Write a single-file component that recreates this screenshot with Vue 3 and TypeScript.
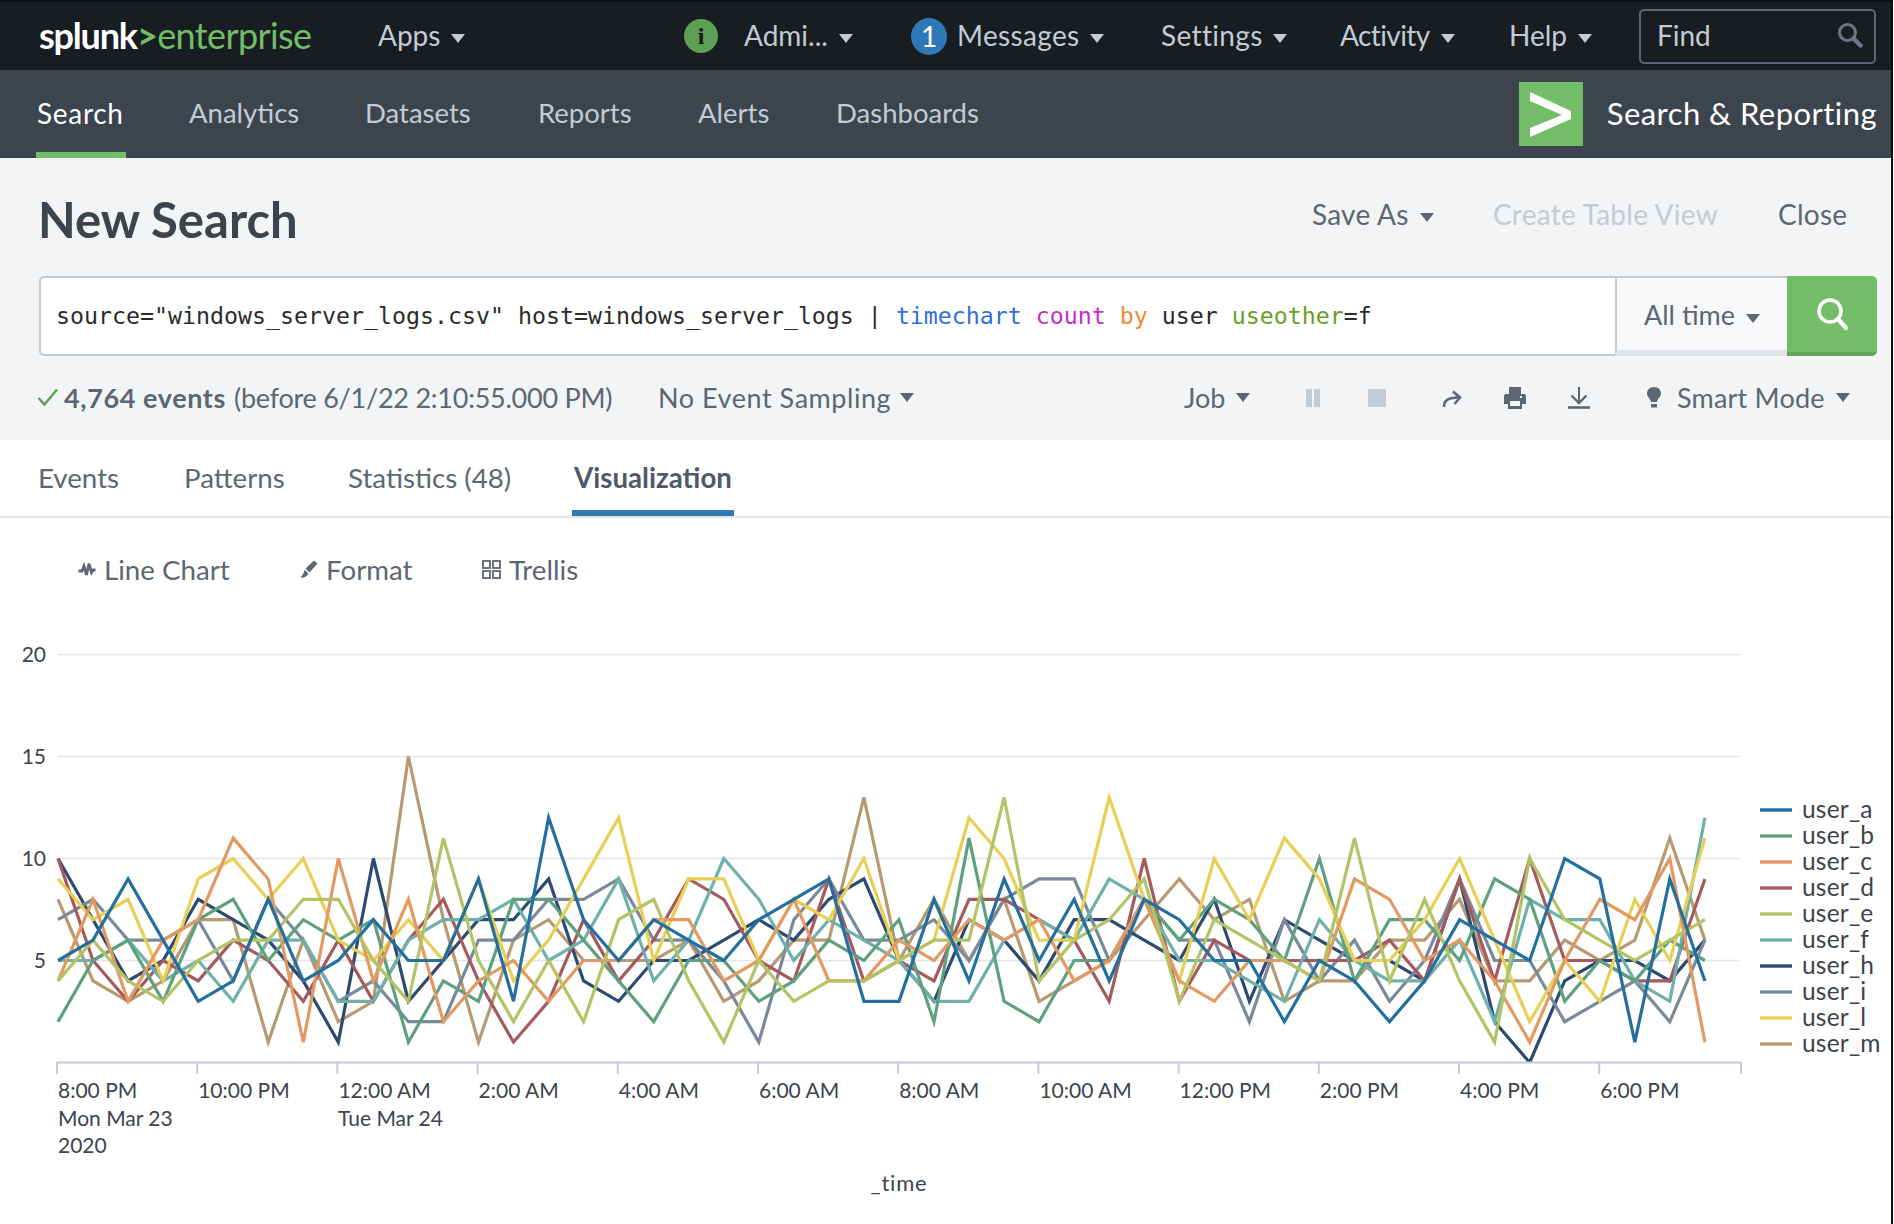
<script setup lang="ts">
interface Series { name: string; color: string; values: number[] }

const raw: Series[] = [
  { name: 'user_a', color: '#256f9f', values: [5,6,9,6,3,4,8,4,5,7,5,5,9,3,12,7,5,7,6,5,7,8,9,3,3,8,4,9,5,8,4,8,7,5,5,2,5,4,2,4,7,6,5,10,9,1,9,4] },
  { name: 'user_b', color: '#5fa17f', values: [2,5,6,3,7,8,5,7,6,7,1,4,3,8,8,6,4,2,5,5,3,4,6,5,7,2,11,3,2,5,5,8,6,8,7,5,10,4,7,7,5,9,8,3,5,4,6,5] },
  { name: 'user_c', color: '#e29a62', values: [4,8,3,6,7,11,9,1,10,4,8,2,4,5,3,5,5,7,7,4,5,8,4,4,6,5,7,6,7,4,5,8,4,3,5,5,4,9,8,5,6,4,1,5,8,7,10,1] },
  { name: 'user_d', color: '#a55b5d', values: [10,5,3,5,4,6,5,3,6,3,6,8,4,1,3,7,4,6,9,8,5,4,9,4,5,4,8,8,7,6,3,10,3,6,5,5,5,5,6,4,9,4,10,5,5,4,4,9] },
  { name: 'user_e', color: '#b3c365', values: [4,6,4,3,5,6,6,8,8,5,3,11,5,2,5,2,7,8,4,1,5,3,4,4,5,6,6,13,4,6,7,9,3,7,6,5,4,11,4,8,4,1,10,7,6,5,6,7] },
  { name: 'user_f', color: '#6fb0ab', values: [5,5,6,4,5,3,6,6,3,3,6,7,7,8,5,6,9,4,6,10,8,5,7,6,5,3,3,6,7,6,9,8,5,5,4,3,7,5,4,4,6,2,8,7,7,4,3,12] },
  { name: 'user_h', color: '#2d4b70', values: [10,7,4,5,8,7,6,4,1,10,3,5,7,7,9,4,3,5,5,6,7,6,8,9,5,3,7,6,4,7,7,6,5,8,3,7,6,5,5,4,9,2,0,4,5,5,4,6] },
  { name: 'user_i', color: '#7a8a9b', values: [7,8,6,6,7,4,8,6,3,4,2,2,6,6,8,8,9,6,6,4,1,7,9,6,6,7,5,8,9,9,5,8,6,6,2,7,4,6,3,5,9,5,5,2,3,4,2,6] },
  { name: 'user_l', color: '#e8cf55', values: [9,7,8,4,9,10,8,10,6,5,7,5,9,4,6,9,12,5,9,9,5,8,7,10,5,6,12,10,6,6,13,8,4,10,7,11,9,5,5,7,10,6,2,5,3,8,5,11] },
  { name: 'user_m', color: '#b79a72', values: [8,4,3,4,7,7,1,6,2,3,15,7,1,6,7,5,5,5,6,3,4,6,6,13,5,8,5,8,3,4,5,7,9,7,8,3,4,4,6,6,8,4,4,6,5,6,11,6] },
]

const yOf = (v: number): number => 1062.5 - 20.4 * v
const xOf = (i: number): number => 58 + 35.04 * i

const legend = raw.map((s, i) => ({ ...s, y: 810 + i * 26 }))

const drawOrder = ['user_m', 'user_h', 'user_i', 'user_d', 'user_f', 'user_b', 'user_l', 'user_c', 'user_e', 'user_a']
const lines = drawOrder.map((n) => {
  const s = raw.find((r) => r.name === n) as Series
  return { name: s.name, color: s.color, points: s.values.map((v, i) => `${xOf(i).toFixed(1)},${yOf(v).toFixed(1)}`).join(' ') }
})

const grid = [5, 10, 15, 20].map((v) => ({ v, y: yOf(v) }))

const timeLabels = ['8:00 PM', '10:00 PM', '12:00 AM', '2:00 AM', '4:00 AM', '6:00 AM', '8:00 AM', '10:00 AM', '12:00 PM', '2:00 PM', '4:00 PM', '6:00 PM']
const ticks = timeLabels.map((label, i) => ({ label, x: 57 + 140.2 * i }))

const topMenu = [
  { label: 'Settings', cls: 'wide' },
  { label: 'Activity', cls: 'tight' },
  { label: 'Help', cls: '' },
]
const navItems = ['Analytics', 'Datasets', 'Reports', 'Alerts', 'Dashboards']
const tabs = [
  { label: 'Events', active: false },
  { label: 'Patterns', active: false },
  { label: 'Statistics (48)', active: false },
  { label: 'Visualization', active: true },
]
</script>

<template>
  <div class="page">
    <header class="topbar">
      <div class="logo"><span class="logo-a">splunk</span><span class="logo-b">&gt;</span><span class="logo-c">enterprise</span></div>
      <div class="top-item">Apps<i class="caret light"></i></div>
      <div class="badge info">i</div>
      <div class="top-item">Admi...<i class="caret light"></i></div>
      <div class="badge count">1</div>
      <div class="top-item wide">Messages<i class="caret light"></i></div>
      <div v-for="m in topMenu" :key="m.label" class="top-item" :class="m.cls">{{ m.label }}<i class="caret light"></i></div>
      <div class="find">
        <span>Find</span>
        <svg width="26" height="26" viewBox="0 0 26 26" fill="none" stroke="#6b7785">
          <circle cx="10.5" cy="10.5" r="8" stroke-width="3" />
          <path d="M16.5 16.5 L23.5 23.5" stroke-width="4.4" stroke-linecap="round" />
        </svg>
      </div>
    </header>

    <nav class="navbar">
      <div class="nav-item active">Search</div>
      <div v-for="n in navItems" :key="n" class="nav-item">{{ n }}</div>
      <div class="brand">
        <div class="brand-mark">
          <svg width="64" height="64" viewBox="0 0 64 64"><path d="M11 10 L52 29 L52 37 L11 55 L11 46 L43 33 L11 19 Z" fill="#fff" /></svg>
        </div>
        <div class="brand-name">Search &amp; Reporting</div>
      </div>
    </nav>

    <section class="search-head">
      <div class="title-row">
        <h1 class="title">New Search</h1>
        <div class="actions">
          <div class="act">Save As<i class="caret"></i></div>
          <div class="act disabled">Create Table View</div>
          <div class="act">Close</div>
        </div>
      </div>

      <div class="searchbar">
        <div class="query">source="windows_server_logs.csv" host=windows_server_logs | <span class="q-blue">timechart</span> <span class="q-pink">count</span> <span class="q-orange">by</span> user <span class="q-green">useother</span>=f</div>
        <div class="range">All time<i class="caret"></i></div>
        <div class="go">
          <svg width="38" height="38" viewBox="0 0 38 38" fill="none" stroke="#fff">
            <circle cx="17" cy="16" r="11" stroke-width="3.6" />
            <path d="M25 24 L33 33" stroke-width="4.4" stroke-linecap="round" />
          </svg>
        </div>
      </div>

      <div class="status">
        <div class="status-main">
          <svg class="check" width="22" height="20" viewBox="0 0 22 20" fill="none"><path d="M1.5 11 L7.5 17.5 L20 2.5" stroke="#5c9e4f" stroke-width="2.4" /></svg>
          <b>4,764 events</b><span class="status-rest">(before 6/1/22 2:10:55.000 PM)</span>
        </div>
        <div class="status-item sampling">No Event Sampling<i class="caret"></i></div>
        <div class="status-item">Job<i class="caret"></i></div>
        <svg class="ic" width="18" height="20" viewBox="0 0 18 20"><rect x="0" y="1" width="6" height="18" fill="#c3cbd4" /><rect x="8" y="1" width="6" height="18" fill="#c3cbd4" /></svg>
        <svg class="ic" width="18" height="20" viewBox="0 0 18 20"><rect x="0" y="1" width="18" height="18" fill="#c3cbd4" /></svg>
        <svg class="ic" width="20" height="20" viewBox="0 0 20 20" fill="none"><path d="M2 19 C2 12 6 10 16 9.5" stroke="#5c6773" stroke-width="2.6" /><path d="M11 3.5 L18 9.5 L12.5 16" stroke="#5c6773" stroke-width="2.6" /></svg>
        <svg class="ic" width="22" height="22" viewBox="0 0 22 22"><path d="M5 0 H17 V7 H20 Q22 7 22 9 V17 H18 V22 H4 V17 H0 V9 Q0 7 2 7 H5 Z" fill="#5c6773" /><rect x="6" y="14" width="10" height="5" fill="#f2f4f6" /><rect x="16" y="9" width="2" height="2" fill="#f2f4f6" /></svg>
        <svg class="ic" width="22" height="22" viewBox="0 0 22 22" fill="none" stroke="#5c6773"><path d="M11 0 V15" stroke-width="2" /><path d="M3.5 8.5 L11 16 L18.5 8.5" stroke-width="2.4" /><path d="M0 20.5 H22" stroke-width="2.6" /></svg>
        <div class="status-item mode">
          <svg width="14" height="21" viewBox="0 0 14 21"><path d="M7 0 C11 0 14 2.8 14 6.6 C14 10 10.5 11.5 10 15 H4 C3.5 11.5 0 10 0 6.6 C0 2.8 3 0 7 0 Z M4 17 H10 V20.5 H4 Z" fill="#5c6773" /></svg>
          <span class="mode-text">Smart Mode</span><i class="caret"></i>
        </div>
      </div>
    </section>

    <div class="tabs">
      <div v-for="t in tabs" :key="t.label" class="tab" :class="{ on: t.active }">{{ t.label }}</div>
    </div>

    <div class="viz-tools">
      <div class="tool">
        <svg width="18" height="17" viewBox="0 0 18 17" fill="none"><path d="M0.5 10 H4 L6 5 L8.5 14 L11 2.5 L13.5 11.5 L15 9 H17.5" stroke="#5c6773" stroke-width="2.8" /></svg>
        Line Chart
      </div>
      <div class="tool">
        <svg width="18" height="18" viewBox="0 0 18 18"><path d="M14 0.5 L17.5 3.5 L9.5 12.5 L5.5 8.5 Z M4.8 9.8 L8.2 13.2 Q7.5 17.5 0.5 17.8 Q3.5 15 4.8 9.8 Z" fill="#5c6773" /></svg>
        Format
      </div>
      <div class="tool">
        <svg width="19" height="19" viewBox="0 0 19 19" fill="none" stroke="#5c6773" stroke-width="1.8"><rect x="1" y="1" width="7" height="7" /><rect x="11" y="1" width="7" height="7" /><rect x="1" y="11" width="7" height="7" /><rect x="11" y="11" width="7" height="7" /></svg>
        Trellis
      </div>
    </div>

    <svg class="chart" width="1891" height="624" viewBox="0 600 1891 624">
      <defs>
        <clipPath id="plot"><rect x="40" y="640" width="1720" height="422" /></clipPath>
      </defs>
      <g v-for="g in grid" :key="g.v">
        <line x1="58" :y1="g.y" x2="1740" :y2="g.y" stroke="#e1e5ea" stroke-width="1.6" />
        <text x="46" :y="g.y + 7" text-anchor="end" class="t">{{ g.v }}</text>
      </g>
      <g clip-path="url(#plot)">
        <polyline v-for="l in lines" :key="l.name" :points="l.points" fill="none" :stroke="l.color" stroke-width="3.2" />
      </g>
      <line x1="57" y1="1062.5" x2="1742" y2="1062.5" stroke="#c3cbd4" stroke-width="2.2" />
      <g v-for="t in ticks" :key="t.label + t.x">
        <line :x1="t.x" y1="1062" :x2="t.x" y2="1074" stroke="#c3cbd4" stroke-width="2" />
        <text :x="t.x + 1" y="1098" class="t">{{ t.label }}</text>
      </g>
      <line x1="1741" y1="1062" x2="1741" y2="1074" stroke="#c3cbd4" stroke-width="2" />
      <text x="58" y="1125.5" class="t">Mon Mar 23</text>
      <text x="58" y="1153" class="t">2020</text>
      <text x="338" y="1125.5" class="t">Tue Mar 24</text>
      <text x="899" y="1191" text-anchor="middle" class="t axis-name">_time</text>
      <g v-for="l in legend" :key="l.name">
        <line x1="1760" :y1="l.y" x2="1792" :y2="l.y" :stroke="l.color" stroke-width="3.4" />
        <text x="1802" :y="l.y + 8" class="t lg">{{ l.name }}</text>
      </g>
    </svg>
  </div>
</template>

<style>
html, body { margin: 0; background: #fff; }
</style>

<style scoped>
.page {
  width: 1891px;
  height: 1224px;
  overflow: hidden;
  border-right: 2px solid #0c0f11;
  font-family: "Lato", "Open Sans", sans-serif;
  color: #3c444d;
  background: #fff;
}
.caret {
  display: inline-block;
  width: 0;
  height: 0;
  margin-left: 11px;
  border-left: 7px solid transparent;
  border-right: 7px solid transparent;
  border-top: 9px solid #5c6773;
  vertical-align: middle;
}
.caret.light { border-top-color: #c3cbd4; }

.topbar {
  height: 68px;
  border-top: 2px solid #0c0f11;
  background: #171d21;
  display: grid;
  grid-template-columns: 339px 306px 60px 167px 46px 204px 179px 169px 130px 237px;
  align-items: center;
  padding-left: 39px;
  color: #c3cbd4;
  font-size: 28px;
}
.top-item { white-space: nowrap; padding-bottom: 3px; }
.top-item.wide { letter-spacing: 0.35px; }
.top-item.tight { letter-spacing: -0.6px; }
.top-item.wide .caret { margin-left: 10px; }
.logo { font-size: 36px; line-height: 1; white-space: nowrap; letter-spacing: -0.6px; padding-bottom: 2px; }
.logo-a { color: #fff; font-weight: 700; letter-spacing: -1.2px; }
.logo-b { color: #73bd68; font-weight: 700; }
.logo-c { color: #73bd68; }
.badge {
  display: flex;
  align-items: center;
  justify-content: center;
  border-radius: 50%;
  color: #fff;
}
.info {
  width: 34px;
  height: 34px;
  background: #5f9f55;
  color: #12181b;
  font-family: "Liberation Serif", serif;
  font-weight: 700;
  font-size: 24px;
}
.count { width: 36px; height: 37px; background: #2f78b8; font-size: 28px; }
.find {
  height: 55px;
  box-sizing: border-box;
  border: 2px solid #5c6773;
  border-radius: 5px;
  display: flex;
  align-items: center;
  justify-content: space-between;
  padding: 0 11px 2px 16px;
}

.navbar {
  height: 88px;
  background: #3c444d;
  display: grid;
  grid-template-columns: 154px 176px 173px 160px 138px 1fr auto;
  padding-left: 36px;
  padding-right: 14px;
  color: #c3cbd4;
  font-size: 27.5px;
}
.nav-item {
  height: 88px;
  box-sizing: border-box;
  line-height: 86px;
  margin-left: -1px;
  white-space: nowrap;
}
.nav-item.active {
  color: #fff;
  width: 90px;
  margin-left: 0;
  padding-left: 1px;
  border-bottom: 6px solid #73bd68;
  font-size: 28px;
  letter-spacing: 0.7px;
}
.brand { display: flex; align-items: center; gap: 24px; }
.brand-mark { width: 64px; height: 64px; background: #73bd68; }
.brand-mark svg { display: block; }
.brand-name { color: #fff; font-size: 31px; letter-spacing: 0.45px; white-space: nowrap; padding-bottom: 2px; }

.search-head { background: #f2f4f6; height: 282px; padding-left: 39px; padding-right: 14px; box-sizing: border-box; }
.title-row { height: 118px; display: flex; justify-content: space-between; }
.title { margin: 38px 0 0 -1px; font-size: 49px; font-weight: 700; line-height: 46px; color: #3c444d; }
.actions {
  display: grid;
  grid-template-columns: 181px 285px 84px;
  font-size: 28px;
  letter-spacing: 0.25px;
  color: #5c6773;
  padding-top: 39px;
  height: 34px;
  line-height: 34px;
  margin-right: 15px;
}
.act { white-space: nowrap; }
.act.disabled { color: #c3cbd4; }

.searchbar {
  height: 80px;
  display: flex;
  border-radius: 5px;
  box-sizing: border-box;
}
.query {
  flex: 1;
  box-sizing: border-box;
  border: 2px solid #c3cbd4;
  border-right: 0;
  border-radius: 5px 0 0 5px;
  background: #fff;
  padding-left: 15px;
  line-height: 76px;
  font-family: "DejaVu Sans Mono", monospace;
  font-size: 23.25px;
  color: #2b2b2b;
  white-space: pre;
}
.q-blue { color: #2f6fe0; }
.q-pink { color: #c32fc4; }
.q-orange { color: #ed8a37; }
.q-green { color: #6a9e1f; }
.range {
  width: 172px;
  box-sizing: border-box;
  background: #f7f8fa;
  border-top: 2px solid #c3cbd4;
  border-left: 2px solid #c3cbd4;
  border-bottom: 6px solid #dfe3e8;
  font-size: 27px;
  color: #5c6773;
  padding-left: 27px;
  line-height: 74px;
  white-space: nowrap;
}
.go {
  width: 90px;
  box-sizing: border-box;
  background: #73bd68;
  border-bottom: 4px solid #63a35b;
  border-radius: 0 5px 5px 0;
  display: flex;
  align-items: center;
  justify-content: center;
}

.status {
  height: 84px;
  display: grid;
  grid-template-columns: 619px 526px 122px 62px 74px 62px 64px 79px auto;
  align-items: center;
  font-size: 27px;
  color: #5c6773;
}
.status-main, .status-item { white-space: nowrap; display: flex; align-items: center; padding-bottom: 2px; }
.status-main b { font-weight: 700; letter-spacing: 0.6px; margin-right: 8px; }
.status-rest { letter-spacing: -0.25px; }
.sampling { letter-spacing: 0.55px; }
.sampling .caret { margin-left: 9px; }
.check { margin: 0 5px 0 -2px; }
.status-item .caret { margin-top: 1px; }
.mode svg { margin-right: 16px; }
.mode-text { letter-spacing: 0.2px; }
.ic { display: block; }

.tabs {
  height: 78px;
  box-sizing: border-box;
  border-bottom: 2px solid #e1e5ea;
  display: grid;
  grid-template-columns: 146px 164px 224px auto;
  padding-left: 38px;
  font-size: 27.7px;
  color: #5c6773;
}
.tab { height: 76px; line-height: 76px; box-sizing: border-box; white-space: nowrap; justify-self: start; }
.tab.on {
  color: #4f5a66;
  font-weight: 700;
  border-bottom: 6px solid #3378b5;
  padding: 0 2px;
  line-height: 76px;
}

.viz-tools {
  height: 82px;
  display: grid;
  grid-template-columns: 222px 182px auto;
  padding-left: 78px;
  padding-top: 20px;
  align-items: center;
  font-size: 27.7px;
  color: #5c6773;
  box-sizing: border-box;
}
.tool { display: flex; align-items: center; gap: 8px; white-space: nowrap; }

.chart { display: block; }
.t { font-family: "Lato", "Open Sans", sans-serif; font-size: 21px; fill: #3c444d; }
.lg { font-size: 24.5px; letter-spacing: 0.2px; }
.axis-name { font-size: 22px; letter-spacing: 0.8px; }
</style>
